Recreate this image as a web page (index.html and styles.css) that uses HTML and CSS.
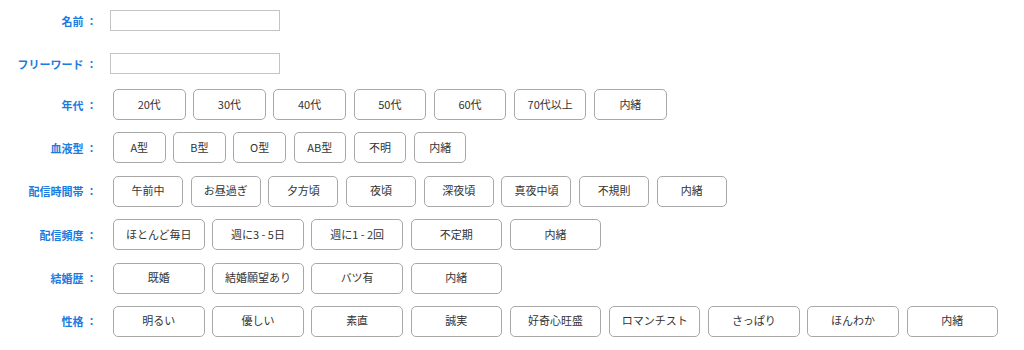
FILE: index.html
```html
<!DOCTYPE html>
<html lang="ja">
<head>
  <meta charset="UTF-8">
  <title>検索条件</title>
  <link rel="stylesheet" href="styles.css">
</head>
<body>
  <form class="search">
    <div class="row row-text">
      <label class="label" for="name">名前 ：</label>
      <input class="field" id="name" type="text">
    </div>
    <div class="row row-text">
      <label class="label" for="word">フリーワード ：</label>
      <input class="field" id="word" type="text">
    </div>

    <div class="row row-first">
      <span class="label">年代 ：</span>
      <div class="choices age">
        <button type="button">20代</button>
        <button type="button">30代</button>
        <button type="button">40代</button>
        <button type="button">50代</button>
        <button type="button">60代</button>
        <button type="button">70代以上</button>
        <button type="button">内緒</button>
      </div>
    </div>

    <div class="row">
      <span class="label">血液型 ：</span>
      <div class="choices blood">
        <button type="button">A型</button>
        <button type="button">B型</button>
        <button type="button">O型</button>
        <button type="button">AB型</button>
        <button type="button">不明</button>
        <button type="button">内緒</button>
      </div>
    </div>

    <div class="row">
      <span class="label">配信時間帯 ：</span>
      <div class="choices time">
        <button type="button">午前中</button>
        <button type="button">お昼過ぎ</button>
        <button type="button">夕方頃</button>
        <button type="button">夜頃</button>
        <button type="button">深夜頃</button>
        <button type="button">真夜中頃</button>
        <button type="button">不規則</button>
        <button type="button">内緒</button>
      </div>
    </div>

    <div class="row">
      <span class="label">配信頻度 ：</span>
      <div class="choices wide">
        <button type="button">ほとんど毎日</button>
        <button type="button">週に3 - 5日</button>
        <button type="button">週に1 - 2回</button>
        <button type="button">不定期</button>
        <button type="button">内緒</button>
      </div>
    </div>

    <div class="row">
      <span class="label">結婚歴 ：</span>
      <div class="choices wide">
        <button type="button">既婚</button>
        <button type="button">結婚願望あり</button>
        <button type="button">バツ有</button>
        <button type="button">内緒</button>
      </div>
    </div>

    <div class="row">
      <span class="label">性格 ：</span>
      <div class="choices wide">
        <button type="button">明るい</button>
        <button type="button">優しい</button>
        <button type="button">素直</button>
        <button type="button">誠実</button>
        <button type="button">好奇心旺盛</button>
        <button type="button">ロマンチスト</button>
        <button type="button">さっぱり</button>
        <button type="button">ほんわか</button>
        <button type="button">内緒</button>
      </div>
    </div>
  </form>
</body>
</html>
```

FILE: styles.css
```css
body {
  margin: 0;
  background-color: #ffffff;
  font-family: "Noto Sans CJK JP", "Liberation Sans", sans-serif;
  font-size: 11px;
  color: #333333;
}
.search {
  display: flex;
  flex-direction: column;
  padding-top: 10px;
}
.row {
  display: flex;
  align-items: center;
  column-gap: 13px;
  height: 31px;
  margin-bottom: 12.4px;
}
.row-text {
  height: 21px;
  margin-bottom: 22px;
}
.row-first {
  margin-top: -7px;
}
.label {
  flex: 0 0 97px;
  text-align: right;
  font-weight: bold;
  color: #1a7be0;
  white-space: nowrap;
}
.field {
  box-sizing: border-box;
  width: 170px;
  height: 21px;
  margin: 0;
  padding: 2px 4px;
  border: 1px solid #c4c4c4;
  border-radius: 0;
  font: inherit;
}
.choices {
  display: flex;
  column-gap: 7.7px;
  margin-left: 3px;
}
.choices button {
  box-sizing: border-box;
  height: 31px;
  padding: 0 0 2px;
  background-color: #ffffff;
  border: 1px solid #a8a8a8;
  border-radius: 5px;
  font-family: inherit;
  font-size: 11px;
  color: #333333;
  white-space: nowrap;
  cursor: pointer;
}
.choices button:hover {
  background-color: #f3f8fe;
}
.age button {
  width: 72.5px;
}
.blood button {
  width: 52.5px;
}
.time button {
  width: 70px;
}
.wide button {
  width: 91.5px;
}
```
